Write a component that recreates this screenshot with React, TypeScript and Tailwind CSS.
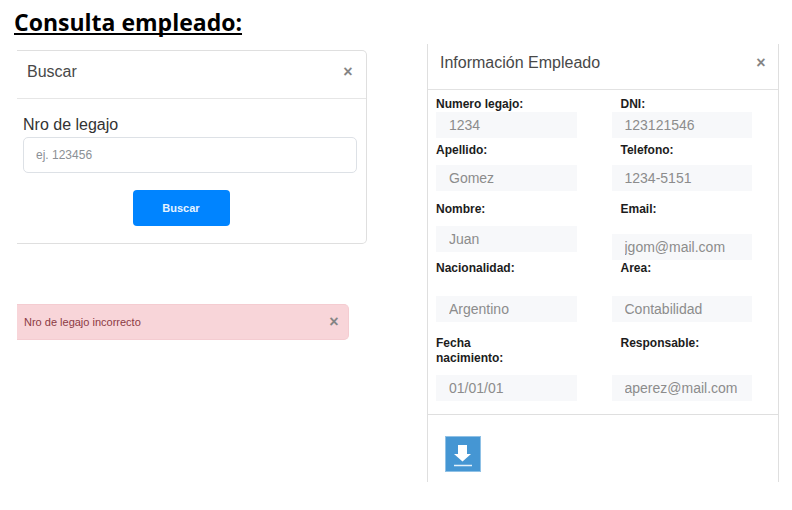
import type { ReactNode } from "react";

type FieldProps = {
  id: string;
  label: ReactNode;
  value: string;
  className?: string;
  labelClassName?: string;
};

function Field({ id, label, value, className = "", labelClassName = "" }: FieldProps) {
  return (
    <div className={`flex min-w-0 flex-col justify-between ${className}`}>
      <label htmlFor={id} className={`text-[12px] leading-[15px] font-bold text-[#1c1c1c] ${labelClassName}`}>
        {label}
      </label>
      <input
        id={id}
        type="text"
        readOnly
        defaultValue={value}
        className="h-[26px] w-full bg-[#f7f8fa] px-[13px] text-[14px] text-[#8c8c8c] outline-none"
      />
    </div>
  );
}

function CloseButton() {
  return (
    <button type="button" aria-label="Cerrar" className="w-4 text-center text-[16px] leading-6 font-bold text-[#858585]">
      ×
    </button>
  );
}

function SearchCard() {
  return (
    <section className="rounded-r-[5px] border border-l-0 border-[#dfdfdf]">
      <header className="flex items-center justify-between border-b border-[#e6e6e6] pt-[9px] pr-[10px] pb-[14px] pl-[10px]">
        <h2 className="text-[16px] leading-6 text-[#484848]">Buscar</h2>
        <CloseButton />
      </header>
      <form className="pt-[14px] pr-[9px] pb-[17px] pl-[6px]" onSubmit={(e) => e.preventDefault()}>
        <label htmlFor="nro-legajo" className="block text-[16px] leading-6 text-[#333333]">
          Nro de legajo
        </label>
        <input
          id="nro-legajo"
          type="text"
          placeholder="ej. 123456"
          className="block h-9 w-full rounded-[5px] border border-[#dde1e6] px-3 text-[12px] outline-none placeholder:text-[#8b9095]"
        />
        <div className="mt-[17px] flex justify-center pr-[18px]">
          <button type="submit" className="h-9 w-[97px] rounded-[4px] bg-[#0084ff] text-[11px] font-bold text-[#e6f3ff]">
            Buscar
          </button>
        </div>
      </form>
    </section>
  );
}

function ErrorAlert() {
  return (
    <div role="alert" className="mt-[60px] mr-[18px] flex h-9 items-center justify-between rounded-r-[5px] border border-l-0 border-[#f4ccd1] bg-[#f8d5d9] pr-[6px] pl-[7px]">
      <p className="text-[11px] text-[#8c3a44]">Nro de legajo incorrecto</p>
      <CloseButton />
    </div>
  );
}

function EmployeeCard() {
  return (
    <section className="border-x border-[#dfdfdf]">
      <header className="flex items-center justify-between border-b border-[#e2e2e2] pt-[7px] pr-[9px] pb-[14px] pl-3">
        <h2 className="text-[16px] leading-6 text-[#484848]">Información Empleado</h2>
        <CloseButton />
      </header>
      <div className="border-b border-[#dfdfdf] pt-[7px] pr-[26px] pb-[13px] pl-[8px]">
        <div className="grid grid-cols-2 gap-x-[35px]">
          <Field id="legajo" label="Numero legajo:" value="1234" />
          <Field id="dni" label="DNI:" value="123121546" labelClassName="pl-[9px]" />
        </div>
        <div className="mt-[5px] grid grid-cols-2 gap-x-[35px]">
          <Field id="apellido" label="Apellido:" value="Gomez" className="h-12" />
          <Field id="telefono" label="Telefono:" value="1234-5151" labelClassName="pl-[9px]" />
        </div>
        <div className="mt-[11px] grid grid-cols-2 items-start gap-x-[35px]">
          <Field id="nombre" label="Nombre:" value="Juan" className="h-[50px]" />
          <Field id="email" label="Email:" value="jgom@mail.com" className="h-[58px]" labelClassName="pl-[9px]" />
        </div>
        <div className="mt-px grid grid-cols-2 gap-x-[35px]">
          <Field id="nacionalidad" label="Nacionalidad:" value="Argentino" className="h-[61px]" />
          <Field id="area" label="Area:" value="Contabilidad" labelClassName="pl-[9px]" />
        </div>
        <div className="mt-[14px] grid grid-cols-2 gap-x-[35px]">
          <Field
            id="nacimiento"
            label={
              <>
                Fecha
                <br />
                nacimiento:
              </>
            }
            value="01/01/01"
            className="h-[65px]"
          />
          <Field id="responsable" label="Responsable:" value="aperez@mail.com" labelClassName="pl-[9px]" />
        </div>
      </div>
      <footer className="pt-[21px] pb-[10px] pl-[17px]">
        <button type="button" aria-label="Descargar" className="block size-9 border border-[#8fc1e6] bg-[#4596d3]">
          <svg viewBox="1 1 34 34" className="block size-full" aria-hidden="true">
            <path d="M13 9h9v9h4l-8.500 7.500L9 18h4z" fill="#fff" />
            <path d="M9 29.500h18" stroke="#e4f1fa" strokeWidth="1.500" />
          </svg>
        </button>
      </footer>
    </section>
  );
}

export default function App() {
  return (
    <main className="min-h-screen bg-white pt-2 pr-[13px] pb-7 pl-[14px] font-['Liberation_Sans',Arial,sans-serif]">
      <h1 className="font-['Open_Sans',sans-serif] text-[23px] leading-7 font-bold text-black underline decoration-2 underline-offset-2 [text-decoration-skip-ink:none]">
        Consulta empleado:
      </h1>
      <div className="mt-2 ml-[3px] grid grid-cols-[175fr_176fr] items-start gap-x-[60px]">
        <div className="pt-[6px]">
          <SearchCard />
          <ErrorAlert />
        </div>
        <EmployeeCard />
      </div>
    </main>
  );
}
